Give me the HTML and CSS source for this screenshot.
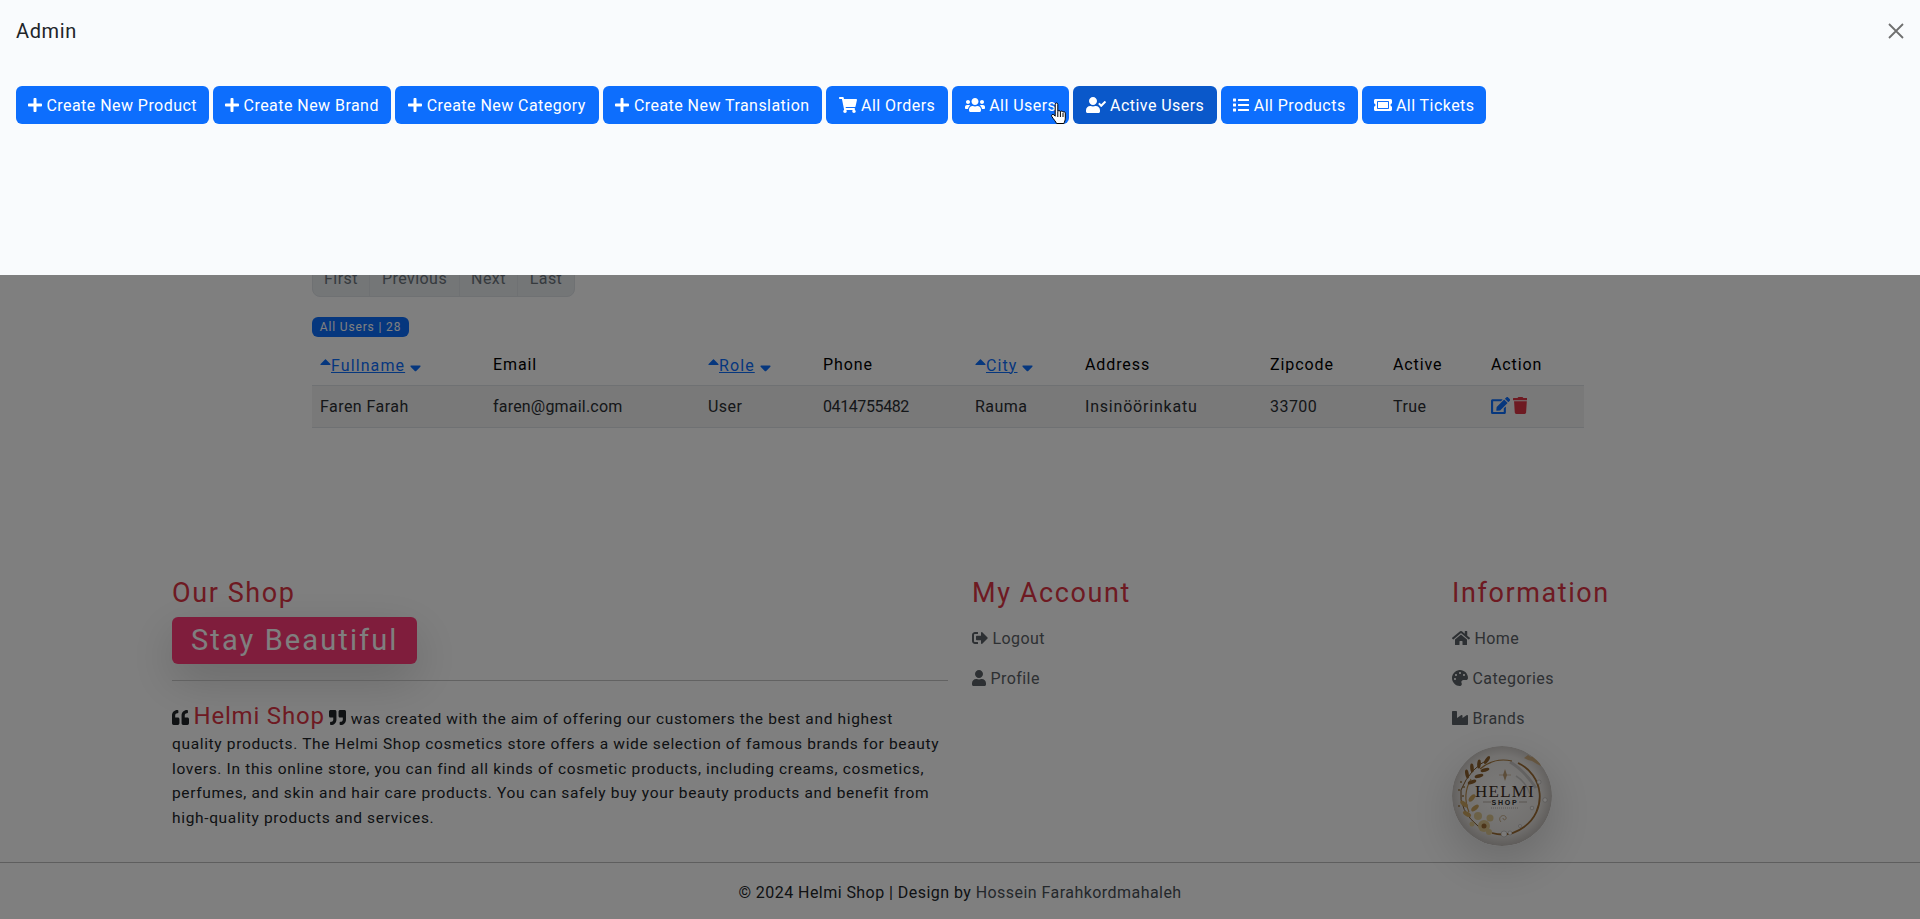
FILE: index.html
```html
<!DOCTYPE html>
<html lang="en">
<head>
    <meta charset="UTF-8">
    <meta name="viewport" content="width=device-width, initial-scale=1.0">
    <title>Helmi Shop</title>
    <link rel="stylesheet" href="styles.css">
</head>
<body>
    <main class="container">
        <div class="pagination">
            <a class="page-first">First</a>
            <a class="page-prev">Previous</a>
            <a class="page-next">Next</a>
            <a class="page-last">Last</a>
        </div>
        <span class="count-badge">All Users | 28</span>
        <table class="users">
            <thead>
                <tr>
                    <th class="col-name"><svg class="ico sort-up" viewBox="0 0 320 512"><path d="M288 352H32c-18 0-27-21-14-34L146 190c8-8 20-8 28 0l128 128c13 13 4 34-14 34z"/></svg><a href="#">Fullname</a> <svg class="ico sort-down" viewBox="0 0 320 512"><path d="M32 192h256c18 0 27 21 14 34L174 354c-8 8-20 8-28 0L18 226c-13-13-4-34 14-34z"/></svg></th>
                    <th class="col-email">Email</th>
                    <th class="col-role"><svg class="ico sort-up" viewBox="0 0 320 512"><path d="M288 352H32c-18 0-27-21-14-34L146 190c8-8 20-8 28 0l128 128c13 13 4 34-14 34z"/></svg><a href="#">Role</a> <svg class="ico sort-down" viewBox="0 0 320 512"><path d="M32 192h256c18 0 27 21 14 34L174 354c-8 8-20 8-28 0L18 226c-13-13-4-34 14-34z"/></svg></th>
                    <th class="col-phone">Phone</th>
                    <th class="col-city"><svg class="ico sort-up" viewBox="0 0 320 512"><path d="M288 352H32c-18 0-27-21-14-34L146 190c8-8 20-8 28 0l128 128c13 13 4 34-14 34z"/></svg><a href="#">City</a> <svg class="ico sort-down" viewBox="0 0 320 512"><path d="M32 192h256c18 0 27 21 14 34L174 354c-8 8-20 8-28 0L18 226c-13-13-4-34 14-34z"/></svg></th>
                    <th class="col-address">Address</th>
                    <th class="col-zip">Zipcode</th>
                    <th class="col-active">Active</th>
                    <th>Action</th>
                </tr>
            </thead>
            <tbody>
                <tr>
                    <td>Faren Farah</td>
                    <td class="email">faren@gmail.com</td>
                    <td>User</td>
                    <td class="phone">0414755482</td>
                    <td>Rauma</td>
                    <td class="address">Insinöörinkatu</td>
                    <td>33700</td>
                    <td>True</td>
                    <td class="actions">
                        <svg class="ico edit" viewBox="0 0 576 512"><path d="M402.6 83.2l90.2 90.2c3.8 3.8 3.8 10 0 13.8L274.4 405.6l-92.8 10.3c-12.4 1.4-22.9-9.1-21.5-21.5l10.3-92.8L388.8 83.2c3.8-3.8 10-3.8 13.8 0zm162-22.9l-48.8-48.8c-15.2-15.2-39.9-15.2-55.2 0l-35.4 35.4c-3.8 3.8-3.8 10 0 13.8l90.2 90.2c3.8 3.8 10 3.8 13.8 0l35.4-35.4c15.2-15.3 15.2-40 0-55.2zM384 346.2V448H64V128h229.8c3.2 0 6.2-1.3 8.5-3.5l40-40c7.6-7.6 2.2-20.5-8.5-20.5H48C21.5 64 0 85.5 0 112v352c0 26.5 21.5 48 48 48h352c26.5 0 48-21.5 48-48V306.2c0-10.7-12.9-16-20.5-8.5l-40 40c-2.2 2.3-3.5 5.3-3.5 8.5z"/></svg>
                        <svg class="ico trash" viewBox="0 0 448 512"><path d="M432 32H312l-9.4-18.7A24 24 0 0 0 281.1 0H166.8a23.72 23.72 0 0 0-21.4 13.3L136 32H16A16 16 0 0 0 0 48v32a16 16 0 0 0 16 16h416a16 16 0 0 0 16-16V48a16 16 0 0 0-16-16zM53.2 467a48 48 0 0 0 47.9 45h245.8a48 48 0 0 0 47.9-45L416 128H32z"/></svg>
                    </td>
                </tr>
            </tbody>
        </table>
    </main>

    <footer class="site-footer">
        <div class="footer-row">
            <section class="footer-about">
                <h4>Our Shop</h4>
                <div class="slogan">Stay Beautiful</div>
                <hr>
                <p>
                    <svg class="ico quote" viewBox="0 0 512 512"><path d="M464 256h-80v-64c0-35.3 28.7-64 64-64h8c13.3 0 24-10.7 24-24V56c0-13.3-10.7-24-24-24h-8c-88.4 0-160 71.6-160 160v240c0 26.5 21.5 48 48 48h128c26.5 0 48-21.5 48-48V304c0-26.5-21.5-48-48-48zm-288 0H96v-64c0-35.3 28.7-64 64-64h8c13.3 0 24-10.7 24-24V56c0-13.3-10.7-24-24-24h-8C71.6 32 0 103.6 0 192v240c0 26.5 21.5 48 48 48h128c26.5 0 48-21.5 48-48V304c0-26.5-21.5-48-48-48z"/></svg>
                    <span class="brand-name">Helmi Shop</span>
                    <svg class="ico quote" viewBox="0 0 512 512"><path d="M464 32H336c-26.5 0-48 21.5-48 48v128c0 26.5 21.5 48 48 48h80v64c0 35.3-28.7 64-64 64h-8c-13.3 0-24 10.7-24 24v48c0 13.3 10.7 24 24 24h8c88.4 0 160-71.6 160-160V80c0-26.5-21.5-48-48-48zm-288 0H48C21.5 32 0 53.5 0 80v128c0 26.5 21.5 48 48 48h80v64c0 35.3-28.7 64-64 64h-8c-13.3 0-24 10.7-24 24v48c0 13.3 10.7 24 24 24h8c88.4 0 160-71.6 160-160V80c0-26.5-21.5-48-48-48z"/></svg>
                    was created with the aim of offering our customers the best and highest quality products. The Helmi Shop cosmetics store offers a wide selection of famous brands for beauty lovers. In this online store, you can find all kinds of cosmetic products, including creams, cosmetics, perfumes, and skin and hair care products. You can safely buy your beauty products and benefit from high-quality products and services.
                </p>
            </section>
            <section class="footer-account">
                <h4>My Account</h4>
                <a class="footer-link" href="#"><svg class="ico" viewBox="0 0 512 512"><path d="M497 273L329 441c-15 15-41 4.5-41-17v-96H152c-13.3 0-24-10.7-24-24v-96c0-13.3 10.7-24 24-24h136V88c0-21.4 25.9-32 41-17l168 168c9.3 9.4 9.3 24.6 0 34zM192 436v-40c0-6.6-5.4-12-12-12H96c-17.7 0-32-14.3-32-32V160c0-17.7 14.3-32 32-32h84c6.6 0 12-5.4 12-12V76c0-6.6-5.4-12-12-12H96c-53 0-96 43-96 96v192c0 53 43 96 96 96h84c6.6 0 12-5.4 12-12z"/></svg> Logout</a>
                <a class="footer-link" href="#"><svg class="ico" viewBox="0 0 448 512"><path d="M224 256c70.7 0 128-57.3 128-128S294.7 0 224 0 96 57.3 96 128s57.3 128 128 128zm89.6 32h-16.7c-22.2 10.2-46.9 16-72.9 16s-50.6-5.8-72.9-16h-16.7C60.2 288 0 348.2 0 422.4V464c0 26.5 21.5 48 48 48h352c26.5 0 48-21.5 48-48v-41.6c0-74.2-60.2-134.4-134.4-134.4z"/></svg> Profile</a>
            </section>
            <section class="footer-info">
                <h4>Information</h4>
                <a class="footer-link" href="#"><svg class="ico" viewBox="0 0 576 512"><path d="M280.37 148.26L96 300.11V464a16 16 0 0 0 16 16l112.06-.29a16 16 0 0 0 15.92-16V368a16 16 0 0 1 16-16h64a16 16 0 0 1 16 16v95.64a16 16 0 0 0 16 16.05L464 480a16 16 0 0 0 16-16V300L295.67 148.26a12.19 12.19 0 0 0-15.3 0zM571.6 251.47L488 182.56V44.05a12 12 0 0 0-12-12h-56a12 12 0 0 0-12 12v72.61L318.47 43a48 48 0 0 0-61 0L4.34 251.47a12 12 0 0 0-1.6 16.9l25.5 31A12 12 0 0 0 45.15 301l235.22-193.74a12.19 12.19 0 0 1 15.3 0L530.9 301a12 12 0 0 0 16.9-1.6l25.5-31a12 12 0 0 0-1.7-16.93z"/></svg> Home</a>
                <a class="footer-link" href="#"><svg class="ico" viewBox="0 0 512 512"><path d="M204.3 5C104.9 24.4 24.8 104.3 5.2 203.4c-37 187 131.7 326.4 258.8 306.7 41.2-6.4 61.4-54.6 42.5-91.7-23.1-45.4 9.9-98.4 60.9-98.4h79.7c35.8 0 64.8-29.6 64.9-65.3C511.5 97.1 368.1-26.9 204.3 5zM96 320c-17.7 0-32-14.3-32-32s14.3-32 32-32 32 14.3 32 32-14.3 32-32 32zm32-128c-17.7 0-32-14.3-32-32s14.3-32 32-32 32 14.3 32 32-14.3 32-32 32zm128-64c-17.7 0-32-14.3-32-32s14.3-32 32-32 32 14.3 32 32-14.3 32-32 32zm128 64c-17.7 0-32-14.3-32-32s14.3-32 32-32 32 14.3 32 32-14.3 32-32 32z"/></svg> Categories</a>
                <a class="footer-link" href="#"><svg class="ico" viewBox="0 0 512 512"><path d="M475.115 163.781L336 252.309v-68.28c0-18.916-20.931-30.399-36.885-20.248L160 252.309V56c0-13.255-10.745-24-24-24H24C10.745 32 0 42.745 0 56v400c0 13.255 10.745 24 24 24h464c13.255 0 24-10.745 24-24V184.029c0-18.917-20.931-30.399-36.885-20.248z"/></svg> Brands</a>
                <svg class="logo" viewBox="0 0 100 100">
                    <defs>
                        <radialGradient id="marble" cx="50%" cy="48%" r="55%">
                            <stop offset="0" stop-color="#f6f5f3"/>
                            <stop offset="0.7" stop-color="#e6e3e0"/>
                            <stop offset="1" stop-color="#b5b0ac"/>
                        </radialGradient>
                    </defs>
                    <circle cx="50" cy="50" r="50" fill="url(#marble)"/>
                    <!-- marble veins -->
                    <path d="M58 16 Q72 24 84 42" fill="none" stroke="#9c9a98" stroke-width="3" opacity=".45"/>
                    <path d="M64 30 Q74 36 78 48" fill="none" stroke="#a5a3a1" stroke-width="1.5" opacity=".5"/>
                    <!-- gold ring -->
                    <path d="M28 23 A37 37 0 0 1 60 15" fill="none" stroke="#a5763a" stroke-width="1.2"/>
                    <path d="M66 17 A37 37 0 0 1 72 81 A37 37 0 0 1 40 87" fill="none" stroke="#9a6a32" stroke-width="1.8"/>
                    <path d="M17 66 A37 37 0 0 1 19 33" fill="none" stroke="#b68a4c" stroke-width="1.2"/>
                    <path d="M72 12 l4 -3 l3 2 l4 -2 l4 5 l2 6 l-4 -2 l-5 -3 l-4 -1z" fill="#c49a5e" opacity=".7"/>
                    <!-- wreath -->
                    <path d="M37 13 Q18 22 9 44 Q6 64 28 82" fill="none" stroke="#7d5628" stroke-width="1"/>
                    <g fill="#8a5f2c">
                        <ellipse cx="35" cy="14" rx="1.8" ry="4.5" transform="rotate(35 35 14)"/>
                        <ellipse cx="27" cy="18" rx="1.8" ry="4.5" transform="rotate(5 27 18)"/>
                        <ellipse cx="20" cy="22" rx="1.8" ry="4.5" transform="rotate(-5 20 22)"/>
                        <ellipse cx="15" cy="28" rx="1.8" ry="4.5" transform="rotate(-10 15 28)"/>
                        <ellipse cx="33" cy="24" rx="1.8" ry="4.5" transform="rotate(75 33 24)"/>
                        <ellipse cx="27" cy="30" rx="1.8" ry="4.5" transform="rotate(75 27 30)"/>
                        <ellipse cx="20" cy="36" rx="1.8" ry="4.5" transform="rotate(70 20 36)"/>
                    </g>
                    <g fill="#9a7a4a">
                        <circle cx="9" cy="36" r="1"/>
                        <circle cx="12" cy="41" r="1"/>
                        <circle cx="7" cy="44" r="1"/>
                        <circle cx="11" cy="50" r="1"/>
                        <circle cx="7" cy="60" r="1"/>
                    </g>
                    <g fill="#c9a25f">
                        <ellipse cx="12" cy="58" rx="2.2" ry="4.5" transform="rotate(-50 12 58)"/>
                        <ellipse cx="20" cy="52" rx="2.2" ry="4.5" transform="rotate(40 20 52)"/>
                        <ellipse cx="15" cy="68" rx="2.2" ry="4.5" transform="rotate(-60 15 68)"/>
                        <ellipse cx="23" cy="62" rx="2.2" ry="4.5" transform="rotate(50 23 62)"/>
                    </g>
                    <g fill="#d8c28c">
                        <circle cx="32" cy="80" r="6"/>
                        <circle cx="26" cy="70" r="4"/>
                        <circle cx="38" cy="72" r="3.5"/>
                        <circle cx="20" cy="78" r="2.5"/>
                        <circle cx="37" cy="86" r="3"/>
                    </g>
                    <circle cx="32" cy="80" r="2.5" fill="#9a6a32"/>
                    <!-- pearls -->
                    <g fill="#f5f3f0" stroke="#8d8b88" stroke-width=".4">
                        <circle cx="87" cy="36" r="2"/>
                        <circle cx="93" cy="54" r="2.2"/>
                        <circle cx="80" cy="62" r="1.8"/>
                        <circle cx="68" cy="80" r="1.5"/>
                        <circle cx="52" cy="88" r="3"/>
                        <circle cx="58" cy="87" r="2"/>
                    </g>
                    <path d="M53 23 l2 6 l-2 6 l-2 -6z" fill="#b99a72"/>
                    <path d="M47 29 h12" stroke="#b99a72" stroke-width=".6"/>
                    <path d="M49 76 c-4 -4 2 -9 5 -5 c1 3 -3 4 -3 1" fill="none" stroke="#b99a72" stroke-width=".8"/>
                    <path d="M31 56 h8 M67 56 h8" stroke="#8f8274" stroke-width=".6"/>
                    <path d="M39 62 h28" stroke="#9c948c" stroke-width=".7" stroke-dasharray="1 1"/>
                    <text class="logo-title" x="53" y="51" text-anchor="middle">HELMI</text>
                    <text class="logo-sub" x="53" y="59" text-anchor="middle">SHOP</text>
                </svg>
            </section>
        </div>
        <div class="copyright">© 2024 Helmi Shop | Design by <a href="#">Hossein Farahkordmahaleh</a></div>
    </footer>

    <div class="backdrop"></div>

    <aside class="offcanvas">
        <div class="offcanvas-header">
            <h5>Admin</h5>
            <svg class="close" viewBox="0 0 16 16"><path d="M1 1l14 14M15 1L1 15"/></svg>
        </div>
        <div class="admin-buttons">
            <a class="btn" href="#"><svg class="ico" viewBox="0 0 448 512"><path d="M416 208H272V64c0-17.67-14.33-32-32-32h-32c-17.67 0-32 14.33-32 32v144H32c-17.67 0-32 14.33-32 32v32c0 17.67 14.33 32 32 32h144v144c0 17.67 14.33 32 32 32h32c17.67 0 32-14.33 32-32V304h144c17.67 0 32-14.33 32-32v-32c0-17.67-14.33-32-32-32z"/></svg> Create New Product</a>
            <a class="btn" href="#"><svg class="ico" viewBox="0 0 448 512"><path d="M416 208H272V64c0-17.67-14.33-32-32-32h-32c-17.67 0-32 14.33-32 32v144H32c-17.67 0-32 14.33-32 32v32c0 17.67 14.33 32 32 32h144v144c0 17.67 14.33 32 32 32h32c17.67 0 32-14.33 32-32V304h144c17.67 0 32-14.33 32-32v-32c0-17.67-14.33-32-32-32z"/></svg> Create New Brand</a>
            <a class="btn" href="#"><svg class="ico" viewBox="0 0 448 512"><path d="M416 208H272V64c0-17.67-14.33-32-32-32h-32c-17.67 0-32 14.33-32 32v144H32c-17.67 0-32 14.33-32 32v32c0 17.67 14.33 32 32 32h144v144c0 17.67 14.33 32 32 32h32c17.67 0 32-14.33 32-32V304h144c17.67 0 32-14.33 32-32v-32c0-17.67-14.33-32-32-32z"/></svg> Create New Category</a>
            <a class="btn" href="#"><svg class="ico" viewBox="0 0 448 512"><path d="M416 208H272V64c0-17.67-14.33-32-32-32h-32c-17.67 0-32 14.33-32 32v144H32c-17.67 0-32 14.33-32 32v32c0 17.67 14.33 32 32 32h144v144c0 17.67 14.33 32 32 32h32c17.67 0 32-14.33 32-32V304h144c17.67 0 32-14.33 32-32v-32c0-17.67-14.33-32-32-32z"/></svg> Create New Translation</a>
            <a class="btn" href="#"><svg class="ico" viewBox="0 0 576 512"><path d="M528.12 301.319l47.273-208C578.806 78.301 567.391 64 551.99 64H159.208l-9.166-44.81C147.758 8.021 137.93 0 126.529 0H24C10.745 0 0 10.745 0 24v16c0 13.255 10.745 24 24 24h69.883l70.248 343.435C147.325 417.1 136 435.222 136 456c0 30.928 25.072 56 56 56s56-25.072 56-56c0-15.674-6.447-29.835-16.824-40h209.647C430.447 426.165 424 440.326 424 456c0 30.928 25.072 56 56 56s56-25.072 56-56c0-22.172-12.888-41.332-31.579-50.405l5.517-24.276c3.413-15.018-8.002-29.319-23.403-29.319H218.117l-6.545-32h293.145c11.206 0 20.92-7.754 23.403-18.681z"/></svg> All Orders</a>
            <a class="btn" href="#"><svg class="ico" viewBox="0 0 640 512"><path d="M96 224c35.3 0 64-28.7 64-64s-28.7-64-64-64-64 28.7-64 64 28.7 64 64 64zm448 0c35.3 0 64-28.7 64-64s-28.7-64-64-64-64 28.7-64 64 28.7 64 64 64zm32 32h-64c-17.6 0-33.5 7.1-45.1 18.6 40.3 22.1 68.9 62 75.1 109.4h66c17.7 0 32-14.3 32-32v-32c0-35.3-28.7-64-64-64zm-256 0c61.9 0 112-50.1 112-112S381.9 32 320 32 208 82.1 208 144s50.1 112 112 112zm76.8 32h-8.3c-20.8 10-43.9 16-68.5 16s-47.6-6-68.5-16h-8.3C179.6 288 128 339.6 128 403.2V432c0 26.5 21.5 48 48 48h288c26.5 0 48-21.5 48-48v-28.8c0-63.6-51.6-115.2-115.2-115.2zm-223.7-13.4C161.5 263.1 145.6 256 128 256H64c-35.3 0-64 28.7-64 64v32c0 17.7 14.3 32 32 32h65.9c6.3-47.4 34.9-87.3 75.2-109.4z"/></svg> All Users</a>
            <a class="btn btn-active" href="#"><svg class="ico" viewBox="0 0 640 512"><path d="M224 256c70.7 0 128-57.3 128-128S294.7 0 224 0 96 57.3 96 128s57.3 128 128 128zm89.6 32h-16.7c-22.2 10.2-46.9 16-72.9 16s-50.6-5.8-72.9-16h-16.7C60.2 288 0 348.2 0 422.4V464c0 26.5 21.5 48 48 48h352c26.5 0 48-21.5 48-48v-41.6c0-74.2-60.2-134.4-134.4-134.4zm323-128.4l-27.8-28.1c-4.6-4.7-12.1-4.7-16.8-.1l-104.8 104-45.5-45.8c-4.6-4.7-12.1-4.7-16.8-.1l-28.1 27.9c-4.7 4.6-4.7 12.1-.1 16.8l81.7 82.3c4.6 4.7 12.1 4.7 16.8.1l141.3-140.2c4.6-4.7 4.7-12.2.1-16.8z"/></svg> Active Users</a>
            <a class="btn" href="#"><svg class="ico" viewBox="0 0 512 512"><path d="M80 368H16a16 16 0 0 0-16 16v64a16 16 0 0 0 16 16h64a16 16 0 0 0 16-16v-64a16 16 0 0 0-16-16zm0-320H16A16 16 0 0 0 0 64v64a16 16 0 0 0 16 16h64a16 16 0 0 0 16-16V64a16 16 0 0 0-16-16zm0 160H16a16 16 0 0 0-16 16v64a16 16 0 0 0 16 16h64a16 16 0 0 0 16-16v-64a16 16 0 0 0-16-16zm416 176H176a16 16 0 0 0-16 16v32a16 16 0 0 0 16 16h320a16 16 0 0 0 16-16v-32a16 16 0 0 0-16-16zm0-320H176a16 16 0 0 0-16 16v32a16 16 0 0 0 16 16h320a16 16 0 0 0 16-16V80a16 16 0 0 0-16-16zm0 160H176a16 16 0 0 0-16 16v32a16 16 0 0 0 16 16h320a16 16 0 0 0 16-16v-32a16 16 0 0 0-16-16z"/></svg> All Products</a>
            <a class="btn" href="#"><svg class="ico" viewBox="0 0 576 512"><path d="M128 160h320v192H128V160zm400 96c0 26.51 21.49 48 48 48v96c0 26.51-21.49 48-48 48H48c-26.51 0-48-21.49-48-48v-96c26.51 0 48-21.49 48-48s-21.49-48-48-48v-96c0-26.51 21.49-48 48-48h480c26.51 0 48 21.49 48 48v96c-26.51 0-48 21.49-48 48zm-48-104c0-13.255-10.745-24-24-24H120c-13.255 0-24 10.745-24 24v208c0 13.255 10.745 24 24 24h336c13.255 0 24-10.745 24-24V152z"/></svg> All Tickets</a>
        </div>
    </aside>

    <svg class="cursor" viewBox="0 0 18 24">
        <path d="M5.2 2.2c0-1.6 2.6-1.6 2.6 0v7.3c.4-1.2 2.4-1.2 2.6.3.4-1.1 2.4-1 2.6.5.5-1 2.3-.7 2.3.8v5.1c0 2.3-.8 3.5-1.4 5.3H6.6c-.9-1.9-3-4.2-4.8-7-.9-1.5.9-2.8 2.1-1.7l1.3 1.4z"/>
        <path d="M7.8 10v5M10.4 10v5M13 11v4"/>
    </svg>
</body>
</html>
```

FILE: styles.css
```css
* {
    box-sizing: border-box;
}
body {
    margin: 0;
    height: 919px;
    overflow: hidden;
    background-color: #fff;
    color: #212529;
    font-family: Roboto, "Liberation Sans", sans-serif;
    font-size: 16px;
    line-height: 1.5;
    letter-spacing: 0.45px;
}
a {
    color: #0d6efd;
}
.ico {
    height: 1em;
    vertical-align: -0.125em;
    fill: currentColor;
}

/* page under the backdrop */
.container {
    width: 1320px;
    margin: 0 auto;
    padding: 259px 12px 0;
    height: 576px;
}
.pagination {
    display: flex;
    width: 263px;
    height: 38px;
    padding-top: 2px;
    background-color: #e9ecef;
    border: 1px solid #dee2e6;
    border-radius: 6px 6px 8px 8px;
    color: #6c757d;
    margin-bottom: 20px;
}
.pagination a {
    display: flex;
    align-items: center;
    justify-content: center;
    margin-top: -2px;
    padding-top: 2px;
    border-right: 1px solid #dee2e6;
    color: #6c757d;
}
.page-first { width: 57px; }
.page-prev { width: 90px; }
.page-next { width: 58px; }
.page-last { width: 56px; border-right: 0 !important; }
.count-badge {
    display: block;
    width: 97px;
    height: 20px;
    border-radius: 6px;
    background-color: #0d6efd;
    color: #fff;
    font-size: 12px;
    font-weight: 400;
    line-height: 20px;
    text-align: center;
    letter-spacing: 0.85px;
}
.users {
    width: 1272px;
    margin-top: 12px;
    border-collapse: collapse;
    table-layout: fixed;
}
.users th {
    height: 36px;
    padding: 0 8px 3px;
    text-align: left;
    font-weight: 400;
    color: #000;
    letter-spacing: 0.9px;
    border-bottom: 1px solid #dee2e6;
}
.users th a {
    letter-spacing: 1.1px;
}
.users td {
    height: 42px;
    padding: 2px 8px 0;
    background-color: #f2f2f2;
    color: #2b2f33;
    border-bottom: 1px solid #dee2e6;
}
.col-name { width: 173px; }
.col-email { width: 215px; }
.col-role { width: 115px; }
.col-phone { width: 152px; }
.col-city { width: 110px; }
.col-address { width: 185px; }
.col-zip { width: 123px; }
.col-active { width: 98px; }
.users .email {
    letter-spacing: 0.2px;
}
.users .phone {
    letter-spacing: -0.4px;
}
.users .address {
    letter-spacing: 0.8px;
}
.sort-up,
.sort-down {
    color: #0d6efd;
    height: 1.1em;
}
.sort-up {
    vertical-align: 0.05em;
}
.sort-down {
    vertical-align: -0.35em;
}
.edit {
    color: #0d6efd;
    height: 17px;
}
.trash {
    color: #dc3545;
    height: 17px;
    margin-left: -2px;
}

/* footer */
.site-footer {
    background-color: #fff;
}
.footer-row {
    display: grid;
    grid-template-columns: 800px 480px 480px;
    margin-left: 160px;
    height: 286px;
}
.footer-row section {
    padding: 0 12px;
}
.footer-row h4 {
    margin: 0;
    color: #dc3545;
    font-size: 27px;
    font-weight: 400;
    line-height: 34px;
    letter-spacing: 1.6px;
}
.slogan {
    width: 245px;
    height: 47px;
    margin-top: 7px;
    padding-left: 19px;
    border-radius: 6px;
    background-color: #ff3a78;
    color: #fff;
    font-size: 29px;
    line-height: 47px;
    letter-spacing: 2.1px;
    box-shadow: 0 16px 48px rgba(0, 0, 0, 0.175);
}
.footer-about hr {
    margin: 16px 0 0;
    border: 0;
    border-top: 1px solid #c4c4c4;
}
.footer-about p {
    max-width: 770px;
    margin: 23px 0 0;
    font-size: 15.5px;
    line-height: 24.8px;
    letter-spacing: 0.66px;
}
.brand-name {
    color: #dc3545;
    font-size: 24px;
    letter-spacing: 0.8px;
}
.quote {
    color: #212529;
    height: 17px;
}
.footer-link {
    display: block;
    margin-top: 11px;
    height: 29px;
    color: #5b6166;
    text-decoration: none;
    line-height: 29px;
}
.footer-account .footer-link:first-of-type,
.footer-info .footer-link:first-of-type {
    margin-top: 14px;
}
.logo {
    display: block;
    width: 100px;
    height: 100px;
    margin-top: 13px;
    border-radius: 50%;
    box-shadow: 0 16px 48px rgba(0, 0, 0, 0.175);
}
.logo-title {
    font-family: "Liberation Serif", serif;
    font-size: 17px;
    fill: #3a2a1c;
    letter-spacing: 1.2px;
}
.logo-sub {
    font-family: "Liberation Sans", sans-serif;
    font-size: 7px;
    font-weight: 700;
    fill: #2a2a2a;
    letter-spacing: 1.8px;
}
.copyright {
    border-top: 1px solid #bdbdbd;
    height: 56px;
    padding-top: 18px;
    text-align: center;
}
.copyright a {
    color: #495057;
    text-decoration: none;
}

/* admin panel over the page */
.backdrop {
    position: fixed;
    inset: 0;
    background-color: #000;
    opacity: 0.5;
}
.offcanvas {
    position: fixed;
    top: 0;
    left: 0;
    right: 0;
    height: 275px;
    background-color: #f9fbfd;
}
.offcanvas-header {
    display: flex;
    align-items: center;
    justify-content: space-between;
    padding: 16px;
    height: 62px;
}
.offcanvas-header h5 {
    margin: 0;
    font-size: 20px;
    font-weight: 400;
    letter-spacing: 0.6px;
}
.close {
    width: 16px;
    height: 16px;
    fill: none;
    stroke: #6f6f6f;
    stroke-width: 1.8;
}
.admin-buttons {
    display: flex;
    gap: 4px;
    padding: 24px 16px 0;
}
.btn {
    height: 38px;
    padding-top: 1px;
    border-radius: 6px;
    background-color: #0d6efd;
    color: #fff;
    line-height: 38px;
    text-align: center;
    text-decoration: none;
    white-space: nowrap;
}
.btn:nth-child(1) { width: 193px; }
.btn:nth-child(2) { width: 178px; }
.btn:nth-child(3) { width: 204px; }
.btn:nth-child(4) { width: 219px; }
.btn:nth-child(5) { width: 122px; }
.btn:nth-child(6) { width: 117px; }
.btn:nth-child(7) { width: 144px; }
.btn:nth-child(8) { width: 137px; }
.btn:nth-child(9) { width: 124px; }
.btn-active {
    background-color: #0a58ca;
}
.cursor {
    position: fixed;
    left: 1050px;
    top: 102px;
    width: 18px;
    height: 24px;
    fill: #fff;
    stroke: #000;
    stroke-width: 1;
}
```
